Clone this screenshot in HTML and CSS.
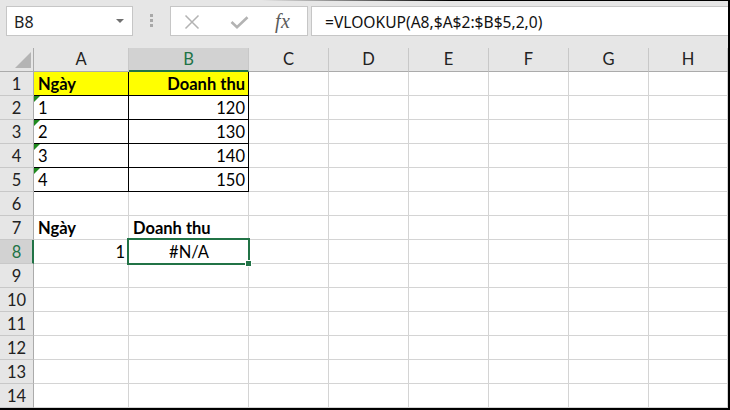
FILE: index.html
```html
<!DOCTYPE html>
<html lang="vi">
<head>
<meta charset="utf-8">
<title>VLOOKUP #N/A</title>
<link rel="stylesheet" href="styles.css">
</head>
<body>
<div class="app">
  <div class="toolbar">
    <div class="namebox"><span class="nb-text">B8</span><span class="nb-arrow"></span></div>
    <div class="dots"><i></i><i></i><i></i></div>
    <div class="fxbox">
      <svg class="ic-cross" width="16" height="16" viewBox="0 0 16 16"><path d="M1.5 1.5 L14.5 14.5 M14.5 1.5 L1.5 14.5" stroke="#b3b3b3" stroke-width="1.5" fill="none"/></svg>
      <svg class="ic-check" width="19" height="13" viewBox="0 0 19 13"><path d="M1.5 6 L7 11.2 L17.5 1.2" stroke="#b3b3b3" stroke-width="2.6" fill="none"/></svg>
      <span class="fx">fx</span>
    </div>
    <div class="formula">=VLOOKUP(A8,$A$2:$B$5,2,0)</div>
  </div>
  <div class="sheet">
    <div class="hd corner"><svg width="33" height="23" viewBox="0 0 33 23"><polygon points="15,20 31,4 31,20" fill="#b4b4b4"/></svg></div>
    <div class="hd">A</div><div class="hd sel">B</div><div class="hd">C</div><div class="hd">D</div><div class="hd">E</div><div class="hd">F</div><div class="hd">G</div><div class="hd">H</div>

    <div class="rh">1</div><div class="c y b bx">Ngày</div><div class="c y b r bx">Doanh thu</div><div class="c"></div><div class="c"></div><div class="c"></div><div class="c"></div><div class="c"></div><div class="c"></div>

    <div class="rh">2</div><div class="c t bx">1</div><div class="c r bx">120</div><div class="c"></div><div class="c"></div><div class="c"></div><div class="c"></div><div class="c"></div><div class="c"></div>

    <div class="rh">3</div><div class="c t bx">2</div><div class="c r bx">130</div><div class="c"></div><div class="c"></div><div class="c"></div><div class="c"></div><div class="c"></div><div class="c"></div>

    <div class="rh">4</div><div class="c t bx">3</div><div class="c r bx">140</div><div class="c"></div><div class="c"></div><div class="c"></div><div class="c"></div><div class="c"></div><div class="c"></div>

    <div class="rh">5</div><div class="c t bx">4</div><div class="c r bx">150</div><div class="c"></div><div class="c"></div><div class="c"></div><div class="c"></div><div class="c"></div><div class="c"></div>

    <div class="rh">6</div><div class="c"></div><div class="c"></div><div class="c"></div><div class="c"></div><div class="c"></div><div class="c"></div><div class="c"></div><div class="c"></div>

    <div class="rh">7</div><div class="c b">Ngày</div><div class="c b">Doanh thu</div><div class="c"></div><div class="c"></div><div class="c"></div><div class="c"></div><div class="c"></div><div class="c"></div>

    <div class="rh sel">8</div><div class="c r">1</div><div class="c ctr active">#N/A<span class="handle"></span></div><div class="c"></div><div class="c"></div><div class="c"></div><div class="c"></div><div class="c"></div><div class="c"></div>

    <div class="rh">9</div><div class="c"></div><div class="c"></div><div class="c"></div><div class="c"></div><div class="c"></div><div class="c"></div><div class="c"></div><div class="c"></div>

    <div class="rh">10</div><div class="c"></div><div class="c"></div><div class="c"></div><div class="c"></div><div class="c"></div><div class="c"></div><div class="c"></div><div class="c"></div>

    <div class="rh">11</div><div class="c"></div><div class="c"></div><div class="c"></div><div class="c"></div><div class="c"></div><div class="c"></div><div class="c"></div><div class="c"></div>

    <div class="rh">12</div><div class="c"></div><div class="c"></div><div class="c"></div><div class="c"></div><div class="c"></div><div class="c"></div><div class="c"></div><div class="c"></div>

    <div class="rh">13</div><div class="c"></div><div class="c"></div><div class="c"></div><div class="c"></div><div class="c"></div><div class="c"></div><div class="c"></div><div class="c"></div>

    <div class="rh">14</div><div class="c"></div><div class="c"></div><div class="c"></div><div class="c"></div><div class="c"></div><div class="c"></div><div class="c"></div><div class="c"></div>
  </div>
</div>
</body>
</html>
```
FILE: styles.css
```css
* { box-sizing: border-box; }
html, body { margin: 0; padding: 0; background: #ffffff; }

.app {
  width: 730px;
  height: 410px;
  border-right: 2px solid #000;
  border-bottom: 2px solid #000;
  overflow: hidden;
  font-family: Lato, "Liberation Sans", sans-serif;
}

/* ---------- formula bar ---------- */
.toolbar {
  height: 48px;
  background: #e6e6e6;
  display: flex;
  align-items: flex-start;
  padding: 5px 0 0 6px;
  border-top: 1px solid #000;
  border-image: linear-gradient(90deg, #e6e6e6 0%, #e6e6e6 36%, #000 62%, #000 100%) 1;
  font-family: "Noto Sans", "Open Sans", sans-serif;
}

.namebox {
  width: 127px;
  height: 30px;
  background: #fff;
  border: 1px solid #c6c6c6;
  display: flex;
  align-items: center;
  justify-content: space-between;
  padding: 2px 8px 0 7px;
  font-size: 16px;
  color: #222;
}
.nb-arrow {
  width: 0;
  height: 0;
  border-left: 4px solid transparent;
  border-right: 4px solid transparent;
  border-top: 4px solid #707070;
  margin-bottom: 2px;
}

.dots {
  width: 37px;
  height: 30px;
  display: flex;
  flex-direction: column;
  align-items: center;
  justify-content: center;
  gap: 2px;
  padding-bottom: 1px;
}
.dots i {
  display: block;
  width: 3px;
  height: 3px;
  background: #a8a8a8;
}

.fxbox {
  width: 138px;
  height: 30px;
  background: #fff;
  border: 1px solid #c6c6c6;
  position: relative;
  display: flex;
  align-items: center;
  padding-left: 13px;
}
.ic-cross { margin-top: 1px; }
.ic-check { margin-left: 30px; margin-top: 3px; }
.fx {
  margin-left: 26px;
  font-family: "Liberation Serif", "DejaVu Serif", serif;
  font-style: italic;
  font-size: 20px;
  color: #5b5b5b;
  line-height: 1;
  margin-top: -1px;
  letter-spacing: 0.5px;
}

.formula {
  flex: 1;
  height: 30px;
  margin-left: 3px;
  background: #fff;
  border: 1px solid #c6c6c6;
  border-right: none;
  padding: 2px 0 0 13px;
  display: flex;
  align-items: center;
  font-size: 15.6px;
  color: #111;
  white-space: nowrap;
}

/* ---------- sheet grid ---------- */
.sheet {
  display: grid;
  grid-template-columns: 34px 95px 120px 80px 80px 80px 80px 80px 79px;
  grid-auto-rows: 24px;
}

.hd {
  background: #e6e6e6;
  border-right: 1px solid #c8c8c8;
  border-bottom: 1px solid #ababab;
  text-align: center;
  font-size: 16.5px;
  line-height: 23px;
  color: #222;
}
.hd.corner {
  border-right-color: #ababab;
  position: relative;
}
.hd.corner svg { display: block; }
.hd.sel {
  background: #d2d2d2;
  color: #217346;
  border-bottom: 2px solid #217346;
}

.rh {
  background: #e6e6e6;
  border-right: 1px solid #ababab;
  border-bottom: 1px solid #c8c8c8;
  text-align: center;
  font-size: 16.5px;
  line-height: 22px;
  padding-top: 1px;
  color: #222;
}
.rh.sel {
  background: #d2d2d2;
  color: #217346;
  border-right: 2px solid #217346;
  padding-left: 1px;
}

.c {
  position: relative;
  border-right: 1px solid #d4d4d4;
  border-bottom: 1px solid #d4d4d4;
  font-size: 16.5px;
  line-height: 22px;
  padding: 1px 3px 0 4px;
  white-space: nowrap;
  color: #000;
}
.c.y { background: #ffff00; }
.c.b { font-weight: 700; }
.c.r { text-align: right; }
.c.ctr { text-align: center; }
.c.bx { border-right-color: #000; border-bottom-color: #000; }

/* "number stored as text" marker */
.c.t::before {
  content: "";
  position: absolute;
  left: 0;
  top: 0;
  width: 0;
  height: 0;
  border-top: 6px solid #1f8a1f;
  border-right: 6px solid transparent;
}

/* active cell selection */
.c.active { z-index: 2; }
.c.active::after {
  content: "";
  position: absolute;
  left: -2px;
  top: -2px;
  right: -2px;
  bottom: -2px;
  border: 2px solid #217346;
}
.handle {
  position: absolute;
  right: -4px;
  bottom: -4px;
  width: 7px;
  height: 7px;
  background: #217346;
  border: 1px solid #fff;
  z-index: 1;
}
```
